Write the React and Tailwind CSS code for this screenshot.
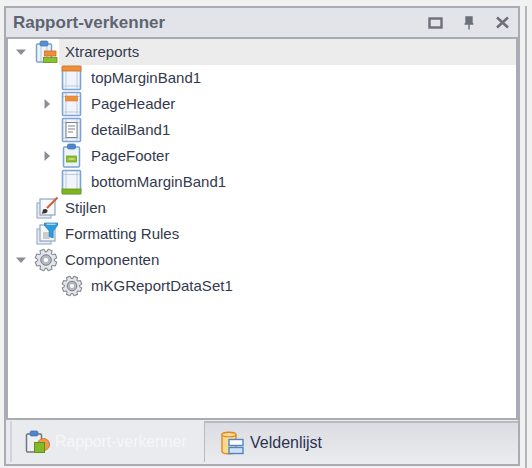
import React from "react";

// gear outline, 8 teeth
function gearPath(cx, cy, r) {
  const pts = [];
  for (let i = 0; i < 8; i++) {
    const a = (i * Math.PI) / 4 - Math.PI / 8;
    const step = Math.PI / 32;
    [[-3.2, 0.76], [-1.9, 1], [1.9, 1], [3.2, 0.76]].forEach(([s, k]) => {
      pts.push(`${(cx + r * k * Math.cos(a + s * step)).toFixed(2)} ${(cy + r * k * Math.sin(a + s * step)).toFixed(2)}`);
    });
  }
  return "M" + pts.join("L") + "Z";
}

const Gear = ({ cx, cy, r }) => (
  <svg width="25" height="26" viewBox="0 0 25 26">
    <path d={gearPath(cx, cy, r)} fill="#e2e5e9" stroke="#868c95" strokeWidth="1.1" strokeLinejoin="round" />
    <circle cx={cx} cy={cy} r={r * 0.48} fill="#b4b9c0" stroke="#7a808a" strokeWidth="1" />
    <circle cx={cx} cy={cy} r={r * 0.2} fill="#fff" />
  </svg>
);

const BandFrame = ({ children }) => (
  <svg width="25" height="26" viewBox="0 0 25 26">
    <rect x="2.5" y="1.5" width="18" height="23" rx="1" fill="#f1f4fa" stroke="#7ba3d4" strokeWidth="1.6" />
    <path d="M6 2v22M17 2v22M3 5.5h17M3 21h17" stroke="#b7cbe6" strokeWidth="1" />
    {children}
  </svg>
);

const TopMarginIcon = () => (
  <BandFrame>
    <rect x="2" y="1" width="19" height="5" fill="#ee8f3a" stroke="#cf6f22" strokeWidth="0.8" />
  </BandFrame>
);

const HeaderIcon = () => (
  <BandFrame>
    <rect x="5.5" y="5" width="12" height="5" fill="#ee8f3a" stroke="#d77a2c" strokeWidth="0.6" />
  </BandFrame>
);

const DetailIcon = () => (
  <BandFrame>
    <rect x="6" y="5.5" width="11" height="15" fill="#fff" stroke="#7b828c" strokeWidth="1" />
    <path d="M8 9h7M8 12h7M8 15h5" stroke="#7b828c" strokeWidth="1" />
  </BandFrame>
);

const BottomMarginIcon = () => (
  <BandFrame>
    <rect x="2" y="20" width="19" height="5" fill="#7fb51e" stroke="#5f9412" strokeWidth="0.8" />
  </BandFrame>
);

const FooterIcon = () => (
  <svg width="25" height="26" viewBox="0 0 25 26">
    <rect x="3.5" y="4" width="16" height="20" rx="1" fill="#eef2f9" stroke="#7ba3d4" strokeWidth="1.5" />
    <rect x="7.5" y="1" width="8" height="5" rx="1.5" fill="#4f86c8" stroke="#3d70ad" strokeWidth="0.7" />
    <rect x="6.5" y="13" width="10" height="6" fill="#8cc02a" stroke="#6a9c16" strokeWidth="0.7" />
    <path d="M8.5 16h6" stroke="#e6f3c4" strokeWidth="1" />
  </svg>
);

const ReportIcon = () => (
  <svg width="25" height="26" viewBox="0 0 25 26">
    <rect x="2.5" y="5" width="15" height="18" rx="1" fill="#eef2f9" stroke="#7ba3d4" strokeWidth="1.5" />
    <path d="M7 6v16M13 6v16" stroke="#b7cbe6" strokeWidth="1" />
    <rect x="6" y="2" width="8" height="5" rx="1.5" fill="#5a90cf" stroke="#3d70ad" strokeWidth="0.7" />
    <rect x="10.5" y="12" width="11.5" height="5" fill="#ee8f3a" stroke="#c96d22" strokeWidth="0.8" />
    <rect x="9.5" y="18.5" width="13.5" height="5" fill="#8cc02a" stroke="#5f9412" strokeWidth="0.8" />
  </svg>
);

const Pages = () => (
  <>
    <rect x="3" y="8" width="14" height="15" fill="#e9edf2" stroke="#9fb2c6" strokeWidth="1.2" />
    <rect x="6" y="4" width="15" height="16" fill="#f7f8fa" stroke="#8fa6bd" strokeWidth="1.2" />
  </>
);

const StylesIcon = () => (
  <svg width="25" height="26" viewBox="0 0 25 26">
    <Pages />
    <path d="M23.5 2.5L13 13" stroke="#c9623a" strokeWidth="2.2" />
    <path d="M9 14.5c2-1 4-.5 4.5 1 .5 2-2 3.5-6 3 1.5-1 1-3 1.5-4z" fill="#3b3430" />
  </svg>
);

const RulesIcon = () => (
  <svg width="25" height="26" viewBox="0 0 25 26">
    <Pages />
    <rect x="9" y="11" width="7" height="7" fill="#c9ccd1" />
    <path d="M10.5 2h13v2.5L19.2 10v7l-4-1.5V10L10.5 4.5z" fill="#2f9bdc" stroke="#1e7ab8" strokeWidth="0.7" />
    <path d="M12.5 3.2h9" stroke="#d6eefb" strokeWidth="1" />
  </svg>
);

const ClipboardTabIcon = () => (
  <svg width="26" height="26" viewBox="0 0 26 26">
    <rect x="1.5" y="5" width="15" height="18" rx="1" fill="#eef0f3" stroke="#6f7680" strokeWidth="1.5" />
    <rect x="5" y="2" width="8" height="5" rx="1.5" fill="#4f86c8" stroke="#3d70ad" strokeWidth="0.7" />
    <circle cx="18.5" cy="15.5" r="6" fill="#ee9a4c" stroke="#cf772b" strokeWidth="1" />
    <rect x="9.5" y="13.5" width="10" height="10" fill="#82b82a" stroke="#5f9412" strokeWidth="1" />
  </svg>
);

const FieldListIcon = () => (
  <svg width="26" height="26" viewBox="0 0 26 26">
    <path d="M2 4.5c0-3 14-3 14 0v17c0 3-14 3-14 0z" fill="#fbd98f" stroke="#d98a2b" strokeWidth="1.4" />
    <path d="M2 4.5c0 3 14 3 14 0" fill="none" stroke="#d98a2b" strokeWidth="1.2" />
    <rect x="9" y="9.5" width="14" height="6" fill="#fff" stroke="#4f86c8" strokeWidth="1.4" />
    <rect x="9" y="17.5" width="14" height="6" fill="#cfe2f7" stroke="#4f86c8" strokeWidth="1.4" />
  </svg>
);

const Arrow = ({ open, has }) => (
  <div className="w-[26px] h-[26px] shrink-0 flex items-center justify-center">
    {has &&
      (open ? (
        <svg width="12" height="8" viewBox="0 0 12 8">
          <path d="M1 1.5h10L6 7z" fill="#8b8e94" />
        </svg>
      ) : (
        <svg width="8" height="12" viewBox="0 0 8 12">
          <path d="M1.5 1v10L7 6z" fill="#8b8e94" />
        </svg>
      ))}
  </div>
);

const rows = [
  { label: "Xtrareports", level: 0, arrow: "open", Icon: ReportIcon, active: true },
  { label: "topMarginBand1", level: 1, Icon: TopMarginIcon },
  { label: "PageHeader", level: 1, arrow: "closed", Icon: HeaderIcon },
  { label: "detailBand1", level: 1, Icon: DetailIcon },
  { label: "PageFooter", level: 1, arrow: "closed", Icon: FooterIcon },
  { label: "bottomMarginBand1", level: 1, Icon: BottomMarginIcon },
  { label: "Stijlen", level: 0, Icon: StylesIcon },
  { label: "Formatting Rules", level: 0, Icon: RulesIcon },
  { label: "Componenten", level: 0, arrow: "open", Icon: () => <Gear cx={12} cy={13} r={11} /> },
  { label: "mKGReportDataSet1", level: 1, Icon: () => <Gear cx={12} cy={13} r={10} /> },
];

export default function App() {
  return (
    <div className="w-[532px] h-[468px] bg-[#f1f1f2] overflow-hidden pt-[6px] font-['Liberation_Sans',Arial,sans-serif]">
      <div className="w-[527px] h-[462px] pl-[4px] pr-[5px] pb-[2px] border-r-2 border-[#b4b5b9]">
        <div className="h-full border-2 border-[#aaacb4] bg-[#e3e4e9] flex flex-col">
          {/* title bar */}
          <div className="h-[29px] shrink-0 flex items-center pl-[7px] pr-[8px]">
            <span className="flex-1 text-[17px] font-bold text-[#5d6472]">Rapport-verkenner</span>
            <div className="flex items-center gap-[20px]">
              <svg width="15" height="12" viewBox="0 0 15 12">
                <rect x="1.5" y="1.5" width="12" height="9" fill="none" stroke="#6b7079" strokeWidth="2.4" />
              </svg>
              <svg width="12" height="14" viewBox="0 0 12 14">
                <path d="M3 1h6v7H3zM1.5 8h9M6 8v5.5" fill="#6b7079" stroke="#6b7079" strokeWidth="1.4" />
              </svg>
              <svg width="15" height="13" viewBox="0 0 15 13">
                <path d="M2 1.5l11 10M13 1.5l-11 10" stroke="#6b7079" strokeWidth="2.6" />
              </svg>
            </div>
          </div>

          {/* tree */}
          <div className="h-[383px] shrink-0 bg-white border-2 border-[#aaacb4] flex flex-col">
            {rows.map(({ label, level, arrow, Icon, active }) => (
              <div key={label} className="flex items-center h-[26px]">
                {level === 1 && <div className="w-[26px] shrink-0" />}
                <Arrow has={!!arrow} open={arrow === "open"} />
                <div className="w-[25px] h-[26px] shrink-0">
                  <Icon />
                </div>
                <div className={`flex-1 h-[26px] flex items-center pl-[6px] text-[15px] text-[#333a4d] ${active ? "bg-[#ececec]" : ""}`}>
                  {label}
                </div>
              </div>
            ))}
          </div>

          {/* tabs */}
          <div className="flex-1 flex pl-[4px] pt-[1px] pb-[2px] bg-[#eaebef]">
            <div className="w-[194px] flex items-center pl-[13px] gap-[4px] border-l-2 border-[#d3d4d9]">
              <ClipboardTabIcon />
              <span className="text-[15.8px] text-[#f6f6f8]">Rapport-verkenner</span>
            </div>
            <div className="flex-1 flex items-center pl-[15px] gap-[4px] border-t-2 border-l border-[#b9bac0] bg-gradient-to-b from-[#dcdde2] to-[#eaebef]">
              <FieldListIcon />
              <span className="text-[16px] text-[#2b3350]">Veldenlijst</span>
            </div>
          </div>
        </div>
      </div>
    </div>
  );
}
